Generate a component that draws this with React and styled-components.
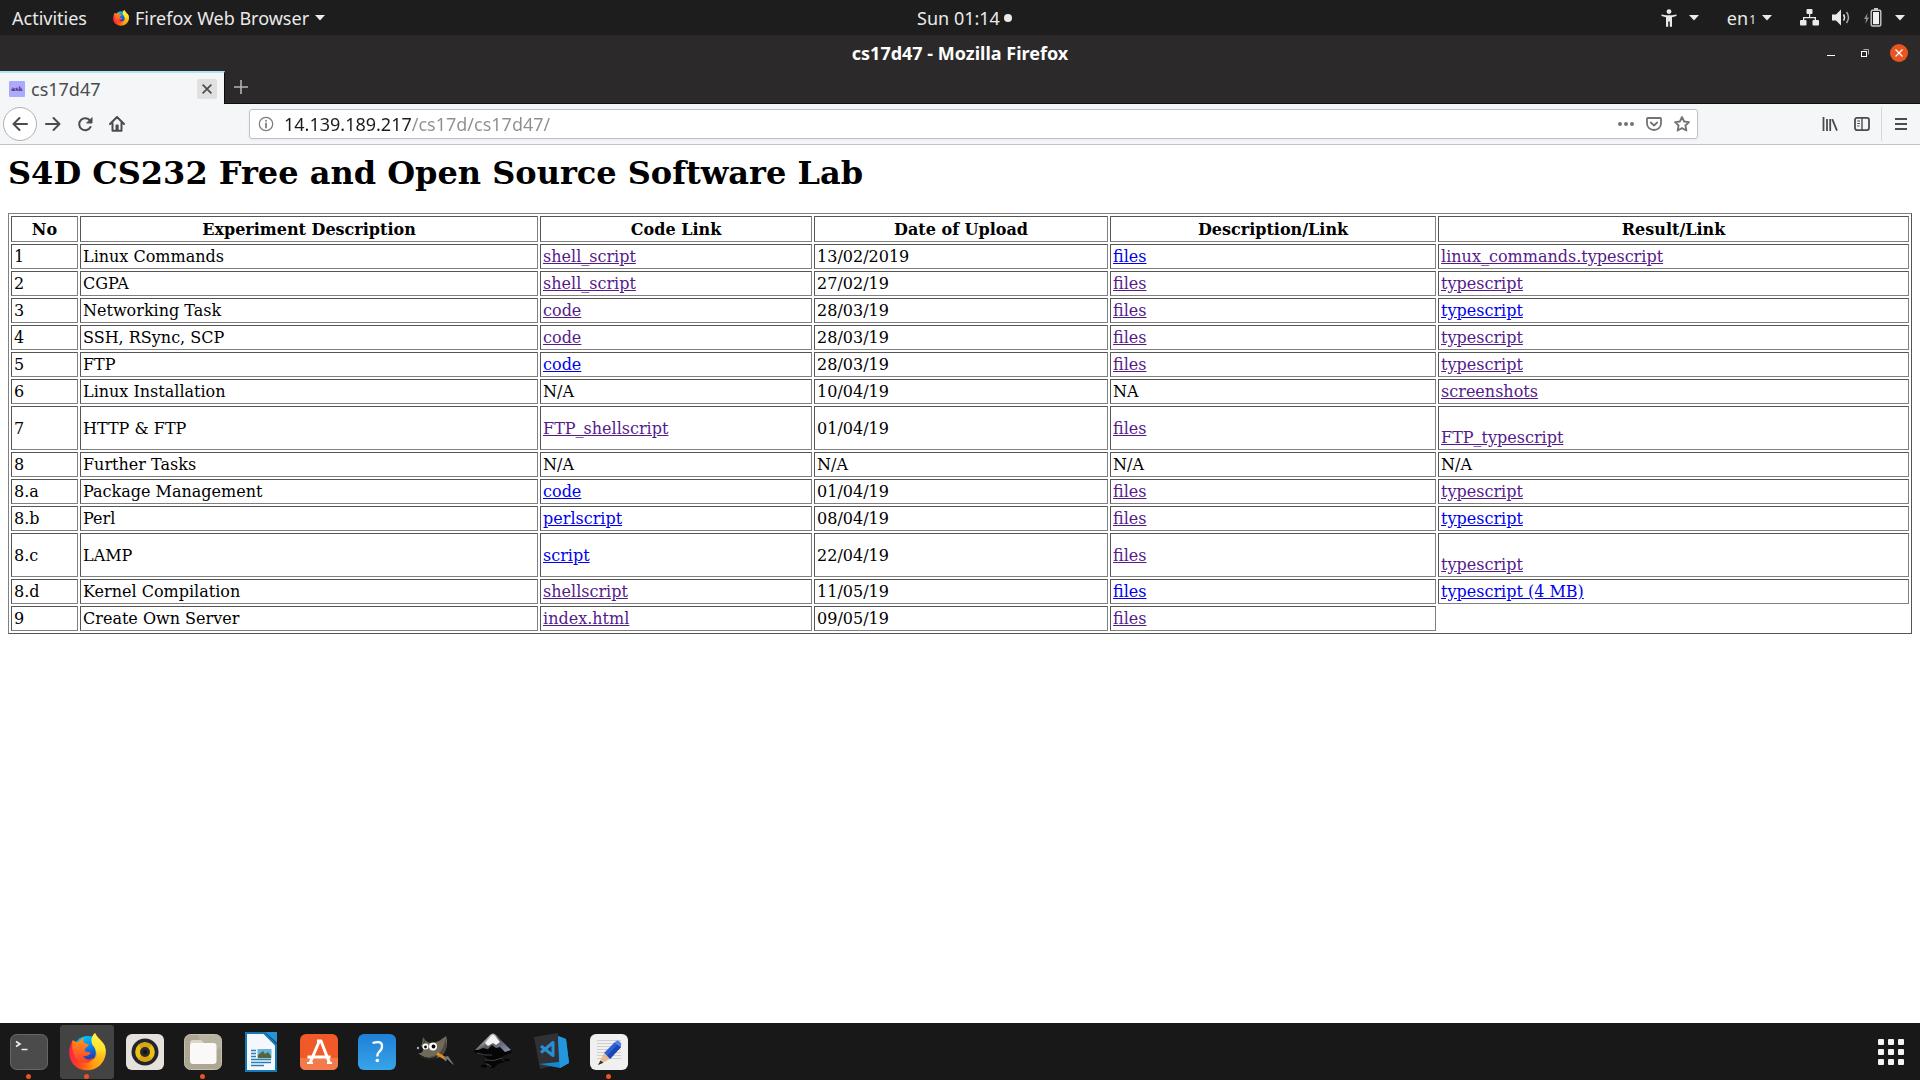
import React, { useId } from "react";
import styled, { createGlobalStyle } from "styled-components";

const GlobalStyle = createGlobalStyle`
  *, *::before, *::after { box-sizing: border-box; }
  body { margin: 0; background: #fff; }
  button { border: 0; padding: 0; background: none; color: inherit; font: inherit; cursor: pointer; }
  svg { display: block; flex: none; }
`;

const uiFont = `"Noto Sans", "Open Sans", sans-serif`;

const Desktop = styled.div`
  display: flex;
  flex-direction: column;
  min-height: 100vh;
  font-family: ${uiFont};
`;

/* ---------- system top bar ---------- */

const TopBar = styled.header`
  display: grid;
  grid-template-columns: 1fr auto 1fr;
  align-items: center;
  height: 35px;
  padding: 0 15px 0 12px;
  background: #1d1d1d;
  color: #eaeaea;
  font-size: 18px;
  line-height: 24px;
`;

const BarGroup = styled.div`
  display: flex;
  align-items: center;
  justify-content: ${(p) => (p.$end ? "flex-end" : "flex-start")};
  gap: ${(p) => p.$gap}px;
`;

const BarButton = styled.button`
  display: flex;
  align-items: center;
  gap: ${(p) => p.$gap || 6}px;
  white-space: nowrap;
`;

const Clock = styled.button`
  display: flex;
  align-items: center;
  gap: 4px;
  padding-left: 12px;
`;

const ClockDot = styled.span`
  width: 8px;
  height: 8px;
  border-radius: 50%;
  background: #eaeaea;
`;

const Sub = styled.span`
  font-size: 12px;
  align-self: flex-end;
  line-height: 20px;
`;

/* ---------- browser window ---------- */

const TitleBar = styled.div`
  display: grid;
  grid-template-columns: 1fr auto 1fr;
  align-items: center;
  height: 36px;
  padding: 0 12px;
  background: #2c292a;
  color: #fff;
`;

const WindowTitle = styled.span`
  grid-column: 2;
  font-size: 18px;
  line-height: 24px;
  font-weight: 700;
`;

const WindowButtons = styled.div`
  display: flex;
  justify-content: flex-end;
  gap: 16px;
`;

const WindowButton = styled.button`
  display: grid;
  place-items: center;
  width: 18px;
  height: 18px;
  border-radius: 50%;
  background: ${(p) => (p.$close ? "#e95420" : "transparent")};
`;

const TabStrip = styled.div`
  display: flex;
  height: 33px;
  background: #2c292a;
  border-bottom: 1px solid #130d10;
`;

const Tab = styled.div`
  display: flex;
  align-items: center;
  gap: 6px;
  width: 225px;
  height: 33px;
  padding: 0 7px 0 9px;
  background: #f5f6f7;
  border-top: 2px solid #b4e4f4;
  border-right: 1px solid #0c0c0d;
  color: #4a4a4f;
  font-size: 18px;
  line-height: 24px;
`;

const Favicon = styled.span`
  display: grid;
  place-items: center;
  width: 16px;
  height: 16px;
  border-radius: 1px;
  background: #aaaaff;
  color: #4a2068;
  font: 700 6px/8px "DejaVu Serif", serif;
`;

const TabTitle = styled.span`
  flex: 1;
`;

const TabClose = styled.button`
  display: grid;
  place-items: center;
  width: 20px;
  height: 20px;
  border-radius: 2px;
  background: #e0e0e1;
`;

const NewTab = styled.button`
  display: grid;
  place-items: center;
  width: 32px;
  height: 32px;
`;

const NavBar = styled.nav`
  display: flex;
  align-items: center;
  height: 41px;
  padding: 0 3px;
  background: #f5f6f7;
  border-bottom: 1px solid #bfc3cc;
`;

const NavButton = styled.button`
  display: grid;
  place-items: center;
  width: 32px;
  height: 32px;
`;

const BackButton = styled.button`
  display: grid;
  place-items: center;
  width: 34px;
  height: 34px;
  border: 1px solid #b1b1b1;
  border-radius: 50%;
  background: #fff;
`;

const UrlBar = styled.label`
  display: flex;
  align-items: center;
  flex: 1;
  height: 30px;
  margin: 0 116px;
  padding: 0 1px 0 8px;
  border: 1px solid #bfc1ca;
  border-radius: 3px;
  background: #fff;
  box-shadow: 0 1px 3px rgba(0, 0, 0, 0.06);
`;

const UrlInput = styled.input`
  flex: 1;
  min-width: 0;
  height: 26px;
  margin-left: 10px;
  padding: 0;
  border: 0;
  outline: 0;
  font: 18px/24px ${uiFont};
  color: #0c0c0d;
  -webkit-text-fill-color: transparent;
  background: linear-gradient(90deg, #1c1c1e 128px, #8f8f90 128px);
  -webkit-background-clip: text;
  background-clip: text;
`;

const UrlAction = styled.button`
  display: grid;
  place-items: center;
  width: 28px;
  height: 28px;
`;

const Divider = styled.span`
  width: 1px;
  height: 34px;
  margin: 0 3px;
  background: #d7d8dc;
`;

/* ---------- web page ---------- */

const Page = styled.main`
  flex: 1;
  padding: 9px 8px 8px;
  background: #fff;
  color: #000;
  font-family: "DejaVu Serif", serif;
  font-size: 16px;
  line-height: 19px;
`;

const Heading = styled.h1`
  margin: 0 0 21px;
  font-size: 32px;
  line-height: 38px;
`;

const LabTable = styled.table`
  width: 100%;
  table-layout: fixed;
  border: 1px solid;
  border-color: #808080 #555 #555 #808080;
  border-spacing: 2px;
`;

const Col = styled.col`
  width: ${(p) => p.$width};
`;

const HeadCell = styled.th`
  padding: 3px 2px 2px;
  border: 1px solid;
  border-color: #555 #808080 #808080 #555;
`;

const Cell = styled.td`
  padding: 2px;
  border: 1px solid;
  border-color: #555 #808080 #808080 #555;
`;

const FileLink = styled.a`
  color: ${(p) => (p.$seen ? "#551a8b" : "#0000ee")};
  text-decoration: underline;
`;

/* ---------- dock ---------- */

const Dock = styled.footer`
  display: flex;
  align-items: center;
  gap: 4px;
  height: 57px;
  padding: 0 12px 0 2px;
  background: #181818;
`;

const DockItem = styled.button`
  position: relative;
  display: grid;
  place-items: center;
  width: 54px;
  height: 54px;
  border-radius: 3px;
  background: ${(p) => (p.$active ? "#434343" : "transparent")};
`;

const RunningDot = styled.span`
  position: absolute;
  bottom: 0;
  left: 24px;
  width: 5px;
  height: 5px;
  border-radius: 50%;
  background: #e95420;
`;

const AppsButton = styled.button`
  display: grid;
  grid-template-columns: repeat(3, 6px);
  gap: 4px;
  margin: 0 4px 0 auto;
`;

const AppsDot = styled.span`
  height: 6px;
  border-radius: 1px;
  background: #f4f4f4;
`;

/* ---------- icons ---------- */

const Caret = () => (
  <svg width="10" height="6" viewBox="0 0 10 6"><path d="M0 0h10L5 5.6z" fill="#eaeaea" /></svg>
);

function FirefoxIcon({ width, height }) {
  const id = useId();
  return (
    <svg width={width} height={height} viewBox="0 0 110 114" preserveAspectRatio="none">
      <defs>
        <linearGradient id={`${id}g`} x1="0.3" y1="0" x2="0.6" y2="1">
          <stop offset="0" stopColor="#00ccff" /><stop offset="0.45" stopColor="#0a7be8" /><stop offset="1" stopColor="#331b85" />
        </linearGradient>
        <linearGradient id={`${id}b`} x1="0" y1="0.4" x2="1" y2="0.5">
          <stop offset="0" stopColor="#ff1f4b" /><stop offset="0.35" stopColor="#ff4a1c" /><stop offset="0.7" stopColor="#ff980e" /><stop offset="1" stopColor="#ffbd1a" />
        </linearGradient>
        <linearGradient id={`${id}f`} x1="0.4" y1="0" x2="0.4" y2="1">
          <stop offset="0" stopColor="#fff44f" /><stop offset="0.5" stopColor="#ffe226" /><stop offset="1" stopColor="#ff980e" stopOpacity="0" />
        </linearGradient>
        <linearGradient id={`${id}h`} x1="0" y1="0" x2="0" y2="1">
          <stop offset="0" stopColor="#ff9a16" /><stop offset="1" stopColor="#ff3a2c" />
        </linearGradient>
      </defs>
      <circle cx="56" cy="52" r="43" fill={`url(#${id}g)`} />
      <path fill={`url(#${id}b)`} d="M11 22C-3 44-4 76 14 95C34 117 72 117 93 96C112 76 111 52 106 38C102 26 86 16 78 0C66 12 67 26 75 38C90 54 84 82 60 82C46 82 35 72 38 60L24 28Z" />
      <path fill={`url(#${id}f)`} d="M77 0C66 10 64 24 70 36C84 50 84 76 62 82C54 92 78 112 93 96C112 76 111 52 106 38C102 27 84 16 77 0Z" />
      <path fill={`url(#${id}h)`} d="M11 22C17 26 21 27 27 28C33 21 38 16 45 14C40 22 43 30 52 32C58 32 61 34 57 39C54 43 49 44 47 49C45 55 50 58 57 57C63 57 66 60 62 63C55 70 47 70 42 68C46 80 61 83 72 74C68 92 38 96 22 76C10 62 8 40 11 22Z" />
    </svg>
  );
}

const AccessIcon = () => (
  <svg width="16" height="18" viewBox="0 0 16 18" fill="#eaeaea">
    <circle cx="8" cy="2.6" r="2.4" />
    <path d="M0.5 5.6L5 6.2h6l4.5-.6v1.5L11 8.2v9.6H8.8V12.500H7.200v5.300H5V8.200L.5 7.100z" />
  </svg>
);

const NetworkIcon = () => (
  <svg width="19" height="17" viewBox="0 0 19 17" fill="#eaeaea">
    <rect x="6.500" y="0" width="6" height="5" rx="1" />
    <path d="M9 4h1.200v4H16v4h-1.300V9.200H4.300V12H3V8h6z" />
    <rect x="0" y="11" width="6.500" height="5.500" rx="1" />
    <rect x="12.500" y="11" width="6.500" height="5.500" rx="1" />
  </svg>
);

const VolumeIcon = () => (
  <svg width="19" height="17" viewBox="0 0 19 17">
    <path d="M0 5.500h4L9 .5v16l-5-5H0z" fill="#eaeaea" />
    <path d="M11.500 5.500q2 3 0 6" fill="none" stroke="#eaeaea" strokeWidth="1.500" />
    <path d="M14.500 3q4 5.500 0 11" fill="none" stroke="#a8a8a8" strokeWidth="1.500" />
  </svg>
);

const BatteryIcon = () => (
  <svg width="18" height="19" viewBox="0 0 18 19">
    <path d="M3.500 5L0 11h2l-.6 5L5 9.500H3z" fill="#8d8d8d" />
    <rect x="7.200" y="2.200" width="9.600" height="15.800" rx="1.500" fill="none" stroke="#c8c8c8" strokeWidth="1.400" />
    <rect x="10" y="0" width="4" height="2" fill="#c8c8c8" />
    <rect x="9" y="4" width="6" height="12.200" fill="#f0f0f0" />
  </svg>
);

const MinimizeIcon = () => (
  <svg width="8" height="8" viewBox="0 0 8 8"><path d="M0 6.500h8" stroke="#fff" /></svg>
);
const RestoreIcon = () => (
  <svg width="8" height="8" viewBox="0 0 8 8" fill="none">
    <path d="M2.500.5h5v5" stroke="#aaa" /><rect x=".5" y="2.500" width="5" height="5" stroke="#fff" />
  </svg>
);
const CloseIcon = ({ size, color, width }) => (
  <svg width={size} height={size} viewBox="0 0 8 8"><path d="M.5.5l7 7m0-7l-7 7" stroke={color} strokeWidth={width} /></svg>
);
const PlusIcon = () => (
  <svg width="14" height="14" viewBox="0 0 14 14"><path d="M7 0v14M0 7h14" stroke="#b5b4b4" strokeWidth="1.600" /></svg>
);

const Stroke = ({ children, color = "#4c4c4f", size = 16, weight = 2 }) => (
  <svg width={size} height={size} viewBox="0 0 16 16" fill="none" stroke={color} strokeWidth={weight} strokeLinecap="round" strokeLinejoin="round">{children}</svg>
);
const BackIcon = () => <Stroke><path d="M15 8H1.500M7.500 2L1.500 8l6 6" /></Stroke>;
const ForwardIcon = () => <Stroke><path d="M1 8h13.500M8.500 2l6 6-6 6" /></Stroke>;
const ReloadIcon = () => (
  <Stroke><path d="M13 4.600A6 6 0 1 0 13.500 11" /><path d="M15 2v5h-5z" fill="#4c4c4f" strokeWidth="1" /></Stroke>
);
const HomeIcon = () => (
  <Stroke><path d="M1 8l7-7 7 7M3.500 7v7.800h9V7" /><path d="M7.500 14V9.500h1.200V14" strokeWidth="2" /></Stroke>
);
const InfoIcon = () => (
  <Stroke color="#7c7c7e" weight={1.2}><circle cx="8" cy="8" r="6.700" /><path d="M8 7.500V11.500M8 4.700v.2" strokeWidth="1.800" /></Stroke>
);
const DotsIcon = () => (
  <svg width="16" height="16" viewBox="0 0 16 16" fill="#737374"><circle cx="2" cy="8" r="2" /><circle cx="8" cy="8" r="2" /><circle cx="14" cy="8" r="2" /></svg>
);
const PocketIcon = () => (
  <Stroke color="#737374" weight={1.8}><path d="M1.800 2h12.400q.8 0 .8.800V7.500A7 6.500 0 0 1 1 7.500V2.800q0-.8.8-.8z" /><path d="M4.800 6.500L8 9.500l3.200-3" /></Stroke>
);
const StarIcon = () => (
  <Stroke color="#737374" weight={1.8}><path d="M8 1l2.100 4.500 4.900.6-3.600 3.400 1 5L8 12.100l-4.400 2.400 1-5L1 6.100l4.900-.6z" /></Stroke>
);
const LibraryIcon = () => (
  <svg width="16" height="16" viewBox="0 0 16 16" stroke="#4c4c4f" strokeWidth="1.800" fill="none"><path d="M1.500 1v14M5 3v12M8.200 3v12M10.200 3.200L15 14.600" /></svg>
);
const SidebarIcon = () => (
  <Stroke weight={1.8}><rect x="1" y="1.900" width="14" height="12.200" rx="2" /><path d="M8 2v12" strokeWidth="1.400" /><path d="M3.600 5h2M3.600 7.500h2M3.600 10h1.400" strokeWidth="1" /></Stroke>
);
const MenuIcon = () => (
  <svg width="14" height="14" viewBox="0 0 14 14" stroke="#4c4c4f" strokeWidth="2"><path d="M1 2h12M1 7h12M1 12h12" /></svg>
);

/* application icons share one drawing area */
const AppSvg = ({ children }) => <svg width="40" height="40" viewBox="0 0 40 40">{children}</svg>;

const TerminalApp = () => (
  <AppSvg>
    <rect x="1.500" y="2.500" width="37" height="35" rx="6" fill="#4b4b4b" stroke="#666" />
    <path d="M7 9.500l4 2.500-4 2.500" fill="none" stroke="#eee" strokeWidth="1.600" /><path d="M12.500 17.500h6" stroke="#eee" strokeWidth="1.500" />
  </AppSvg>
);
const MusicApp = () => (
  <AppSvg>
    <rect x="1" y="2" width="38" height="36" rx="6" fill="#e6e1da" />
    <circle cx="20" cy="20" r="13.500" fill="#23252c" /><circle cx="20" cy="20" r="9.800" fill="#edc018" />
    <path d="M20 20L13 13A10 10 0 0 1 27 13zM20 20L13 27A10 10 0 0 0 27 27z" fill="#d9a512" />
    <circle cx="20" cy="20" r="5" fill="#282a2c" /><circle cx="20" cy="20" r="2" fill="#111" />
  </AppSvg>
);
const FilesApp = () => (
  <AppSvg>
    <rect x="1.500" y="2.500" width="37" height="35" rx="6" fill="#aca692" stroke="#c4bfae" />
    <path d="M15 3h17q6 0 6 6v6L24 26z" fill="#b9b3a1" />
    <path d="M7 11q0-3 3-3h8l3 3v6H7z" fill="#dcd6ca" /><rect x="7" y="11" width="26.500" height="21" rx="3" fill="#faf9f7" />
  </AppSvg>
);
const WriterApp = () => (
  <AppSvg>
    <path d="M4 0h20l12 12v28H4z" fill="#1578b8" /><path d="M6 2h16.500L34 13.500V38H6z" fill="#f5f8fa" />
    <path d="M24 0h12v11z" fill="#2593d6" />
    <path d="M10 18.500h5M10 21.500h5M10 24.500h5M10 27.500h20M10 30.500h20M10 33.500h13" stroke="#2b7db8" strokeWidth="1.500" />
    <rect x="16.500" y="17" width="14" height="9.500" fill="#64b4de" /><path d="M17 26v-3l5-4 2 3 3-2 3 4v2z" fill="#55643a" />
  </AppSvg>
);
const SoftwareApp = () => (
  <AppSvg>
    <rect x="1" y="2" width="38" height="36" rx="6" fill="#f05a28" /><path d="M1 26h38v6q0 6-6 6H7q-6 0-6-6z" fill="#f27a4c" />
    <path d="M18 9h4L30.500 31M20 10L11 31M8.500 25h23" fill="none" stroke="#fff" strokeWidth="3" strokeLinejoin="round" />
    <path d="M8 31h6M28 31h5" stroke="#fff" strokeWidth="2" />
  </AppSvg>
);
const HelpApp = () => {
  const id = useId();
  return (
    <AppSvg>
      <defs><linearGradient id={id} x1="0" y1="0" x2="0" y2="1"><stop offset="0" stopColor="#1f80d6" /><stop offset="1" stopColor="#38a4e8" /></linearGradient></defs>
      <rect x="1" y="2" width="38" height="36" rx="6" fill={`url(#${id})`} />
      <path d="M15.500 11q10-3 9.500 3.500 0 3-3 5.500-1.900 1.700-1.500 4.500" fill="none" stroke="#fff" strokeWidth="2.300" /><circle cx="20.300" cy="28.500" r="1.800" fill="#fff" />
    </AppSvg>
  );
};
const GimpApp = () => (
  <AppSvg>
    <path d="M8 5c2 4 5 6 9 6 5 0 10-4 14-7 2 6 1 11-1 15-3 7-10 9-17 7-5-1-9-4-11-6l5-8z" fill="#706a5a" />
    <path d="M9 6l2 5-3 1zM30 6c0 5-1 9-4 13-3 4-8 6-12 5 9 3 17-2 18-11z" fill="#4d493e" />
    <ellipse cx="4" cy="17.500" rx="4" ry="3.800" fill="#16181b" /><circle cx="3" cy="16" r="1.200" fill="#aaa" />
    <circle cx="10.500" cy="14.500" r="3" fill="#fff" /><circle cx="18" cy="14.500" r="4" fill="#fff" />
    <circle cx="10.500" cy="15" r="1.400" /><circle cx="18.500" cy="14.500" r="1.900" />
    <path d="M5 24q8 5 17 1" stroke="#24221e" strokeWidth="2" fill="none" />
    <path d="M22 21.500l9 5.500" stroke="#e58a20" strokeWidth="3" /><path d="M29 25l4-1 6 9-9-4z" fill="#777" /><path d="M32 27l7 7-8-4z" fill="#111" />
  </AppSvg>
);
const InkscapeApp = () => {
  const id = useId();
  return (
    <AppSvg>
      <defs><linearGradient id={id} x1="0" y1="0" x2="1" y2="1"><stop offset="0.200" stopColor="#d8d8d8" /><stop offset="0.500" stopColor="#5a5a60" /><stop offset="1" stopColor="#8f97bd" /></linearGradient></defs>
      <path d="M17 3q3-3 6 0l15 15q2 3-2 4-8 2-8 5 0 2 5 3-9 1-10 4-3 4-6 1-1-4-7-5 5-2 4-4-2-2-11-5-3-1-1-3z" fill="#050506" />
      <path d="M17 3q3-3 6 0l15 15-6 2-5-5-4 1-4-3-4 4-5-1-5 2-3 0z" fill={`url(#${id})`} /><path d="M18 4q2-2 4 0l5 6-4 3-3-2-5 3-3-3z" fill="#f2f2f2" />
      <path d="M4 21q8 3 15 2m-7 5q9 2 17-2M13 32q4 0 5 3" fill="none" stroke="#444" strokeWidth="1" />
      <ellipse cx="34" cy="28" rx="3" ry="1.300" fill="#050505" /><ellipse cx="11" cy="34" rx="3" ry="1.500" fill="#050505" />
    </AppSvg>
  );
};
const CodeApp = () => (
  <AppSvg>
    <path d="M3 5l24-4 2 31-20 5z" fill="#303035" />
    <path d="M27 4l8 3 3 24-9 5-21-4 20-2z" fill="#1687cd" /><path d="M27 4l8 3 3 24-9 5z" fill="#2496de" />
    <path d="M10 14l12 9.500V10.500L10 20.500" fill="none" stroke="#288fd3" strokeWidth="3" strokeLinejoin="round" />
  </AppSvg>
);
const EditorApp = () => (
  <AppSvg>
    <rect x="1" y="2" width="38" height="36" rx="6" fill="#f0f0f0" />
    <path d="M8 8.500h24M8 11.500h24M8 14.500h24M8 17.500h24M8 20.500h24M8 23.500h24M8 26.500h24" stroke="#cfcfcf" />
    <path d="M15 21L26 10l6 5-11 12z" fill="#2a60d8" /><path d="M28 13l4 2-11 12-3-3z" fill="#1c46b4" />
    <path d="M15 21l6 6-12 6z" fill="#e9bb90" /><path d="M11.500 28.500l3 2.200L9 33z" fill="#333" /><path d="M26 10l2-1.500q2-.5 4 2.500.6 2-.5 4z" fill="#5180ec" />
  </AppSvg>
);
const FirefoxApp = () => <FirefoxIcon width="37" height="38" />;

/* ---------- data ---------- */

const columns = [
  { label: "No", width: "3.55%" },
  { label: "Experiment Description", width: "24.26%" },
  { label: "Code Link", width: "14.41%" },
  { label: "Date of Upload", width: "15.57%" },
  { label: "Description/Link", width: "17.27%" },
  { label: "Result/Link", width: "auto" },
];

const fresh = (text) => ({ text, seen: false });
const seen = (text) => ({ text, seen: true });
const seenBelow = (text) => ({ text, seen: true, breakBefore: true });

const rows = [
  ["1", "Linux Commands", seen("shell_script"), "13/02/2019", fresh("files"), seen("linux_commands.typescript")],
  ["2", "CGPA", seen("shell_script"), "27/02/19", seen("files"), seen("typescript")],
  ["3", "Networking Task", seen("code"), "28/03/19", seen("files"), fresh("typescript")],
  ["4", "SSH, RSync, SCP", seen("code"), "28/03/19", seen("files"), seen("typescript")],
  ["5", "FTP", fresh("code"), "28/03/19", seen("files"), seen("typescript")],
  ["6", "Linux Installation", "N/A", "10/04/19", "NA", seen("screenshots")],
  ["7", "HTTP & FTP", seen("FTP_shellscript"), "01/04/19", seen("files"), seenBelow("FTP_typescript")],
  ["8", "Further Tasks", "N/A", "N/A", "N/A", "N/A"],
  ["8.a", "Package Management", fresh("code"), "01/04/19", seen("files"), seen("typescript")],
  ["8.b", "Perl", fresh("perlscript"), "08/04/19", seen("files"), fresh("typescript")],
  ["8.c", "LAMP", fresh("script"), "22/04/19", seen("files"), seenBelow("typescript")],
  ["8.d", "Kernel Compilation", seen("shellscript"), "11/05/19", fresh("files"), fresh("typescript (4 MB)")],
  ["9", "Create Own Server", seen("index.html"), "09/05/19", seen("files")],
];

const apps = [
  { name: "Terminal", Icon: TerminalApp, running: true },
  { name: "Firefox", Icon: FirefoxApp, running: true, active: true },
  { name: "Rhythmbox", Icon: MusicApp },
  { name: "Files", Icon: FilesApp, running: true },
  { name: "LibreOffice Writer", Icon: WriterApp },
  { name: "Ubuntu Software", Icon: SoftwareApp },
  { name: "Help", Icon: HelpApp },
  { name: "GIMP", Icon: GimpApp },
  { name: "Inkscape", Icon: InkscapeApp },
  { name: "Visual Studio Code", Icon: CodeApp },
  { name: "Text Editor", Icon: EditorApp, running: true },
];

function CellContent({ value }) {
  if (typeof value === "string") return value;
  return (
    <>
      {value.breakBefore && <br />}
      <FileLink href="#" $seen={value.seen}>{value.text}</FileLink>
    </>
  );
}

export default function App() {
  return (
    <Desktop>
      <GlobalStyle />
      <TopBar>
        <BarGroup $gap={26}>
          <BarButton>Activities</BarButton>
          <BarButton>
            <FirefoxIcon width="16" height="16" />
            Firefox Web Browser
            <Caret />
          </BarButton>
        </BarGroup>
        <Clock>Sun 01:14<ClockDot /></Clock>
        <BarGroup $end $gap={28}>
          <BarButton $gap={12} aria-label="Accessibility"><AccessIcon /><Caret /></BarButton>
          <BarButton $gap={6}><BarButton as="span" $gap={1}>en<Sub>1</Sub></BarButton><Caret /></BarButton>
          <BarButton $gap={13} aria-label="System"><NetworkIcon /><VolumeIcon /><BatteryIcon /><Caret /></BarButton>
        </BarGroup>
      </TopBar>

      <TitleBar>
        <WindowTitle>cs17d47 - Mozilla Firefox</WindowTitle>
        <WindowButtons>
          <WindowButton aria-label="Minimize"><MinimizeIcon /></WindowButton>
          <WindowButton aria-label="Restore"><RestoreIcon /></WindowButton>
          <WindowButton $close aria-label="Close window"><CloseIcon size={8} color="#fff" width={1.3} /></WindowButton>
        </WindowButtons>
      </TitleBar>

      <TabStrip>
        <Tab>
          <Favicon>ask</Favicon>
          <TabTitle>cs17d47</TabTitle>
          <TabClose aria-label="Close tab"><CloseIcon size={10} color="#4a4a4f" width={1.3} /></TabClose>
        </Tab>
        <NewTab aria-label="New tab"><PlusIcon /></NewTab>
      </TabStrip>

      <NavBar>
        <BackButton aria-label="Back"><BackIcon /></BackButton>
        <NavButton aria-label="Forward"><ForwardIcon /></NavButton>
        <NavButton aria-label="Reload"><ReloadIcon /></NavButton>
        <NavButton aria-label="Home"><HomeIcon /></NavButton>
        <UrlBar>
          <InfoIcon />
          <UrlInput aria-label="Address" defaultValue="14.139.189.217/cs17d/cs17d47/" />
          <UrlAction aria-label="Page actions"><DotsIcon /></UrlAction>
          <UrlAction aria-label="Save to Pocket"><PocketIcon /></UrlAction>
          <UrlAction aria-label="Bookmark"><StarIcon /></UrlAction>
        </UrlBar>
        <NavButton aria-label="Library"><LibraryIcon /></NavButton>
        <NavButton aria-label="Sidebars"><SidebarIcon /></NavButton>
        <Divider />
        <NavButton aria-label="Menu"><MenuIcon /></NavButton>
      </NavBar>

      <Page>
        <Heading>S4D CS232 Free and Open Source Software Lab</Heading>
        <LabTable>
          <colgroup>{columns.map((c) => <Col key={c.label} $width={c.width} />)}</colgroup>
          <thead>
            <tr>{columns.map((c) => <HeadCell key={c.label} scope="col">{c.label}</HeadCell>)}</tr>
          </thead>
          <tbody>
            {rows.map((row) => (
              <tr key={row[0]}>
                {row.map((value, i) => <Cell key={i}><CellContent value={value} /></Cell>)}
              </tr>
            ))}
          </tbody>
        </LabTable>
      </Page>

      <Dock>
        {apps.map(({ name, Icon, running, active }) => (
          <DockItem key={name} aria-label={name} $active={active}>
            <Icon />
            {running && <RunningDot />}
          </DockItem>
        ))}
        <AppsButton aria-label="Show applications">
          {Array.from({ length: 9 }, (_, i) => <AppsDot key={i} />)}
        </AppsButton>
      </Dock>
    </Desktop>
  );
}
